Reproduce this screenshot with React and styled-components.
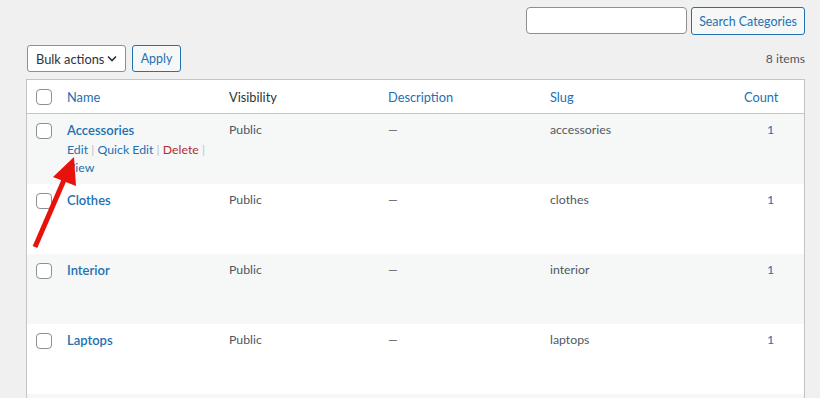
import React from 'react';
import styled, { createGlobalStyle } from 'styled-components';

const GlobalStyle = createGlobalStyle`
  html, body {
    margin: 0;
    background: #f0f0f1;
    font-family: Lato, "Noto Sans", sans-serif;
    font-size: 12.3px;
    color: #3c434a;
  }
`;

const Page = styled.div`
  position: relative;
  width: 820px;
  height: 398px;
  overflow: hidden;
  padding: 7px 15px 0 26px;
  box-sizing: border-box;
`;

const SearchBar = styled.div`
  display: flex;
  justify-content: flex-end;
  gap: 4px;
`;

const SearchInput = styled.input`
  width: 161px;
  height: 27px;
  box-sizing: border-box;
  border: 1px solid #8c8f94;
  border-radius: 4px;
  background: #fff;
`;

const Button = styled.button`
  width: ${props => props.w}px;
  height: ${props => props.h || 28}px;
  box-sizing: border-box;
  padding: 0;
  border: 1px solid #2271b1;
  border-radius: 3px;
  background: #f6f7f7;
  color: #2271b1;
  font-family: inherit;
  font-size: 12.4px;
  white-space: nowrap;
`;

const Toolbar = styled.div`
  display: flex;
  align-items: center;
  margin-top: 10px;
  margin-left: 1px;
  gap: 6px;
`;

const Select = styled.div`
  width: 99px;
  height: 27px;
  box-sizing: border-box;
  display: flex;
  align-items: center;
  justify-content: space-between;
  padding: 0 8px 0 8px;
  border: 1px solid #8c8f94;
  border-radius: 3px;
  background: #fff;
  color: #2c3338;
  font-size: 12.8px;
  white-space: nowrap;
`;

const Count = styled.span`
  margin-left: auto;
  color: #50575e;
  font-size: 12.2px;
`;

const Table = styled.div`
  margin-top: 7px;
  border: 1px solid #c3c4c7;
  background: #fff;
`;

const Row = styled.div`
  display: grid;
  grid-template-columns: 40px 162px 159px 162px 194px 1fr;
  height: ${props => (props.head ? 33 : 70)}px;
  background: ${props => (props.striped ? '#f6f7f7' : '#fff')};
  border-bottom: ${props => (props.head ? '1px solid #c3c4c7' : 'none')};
  align-items: ${props => (props.head ? 'center' : 'start')};
`;

const Cell = styled.div`
  padding: ${props => (props.head ? '0' : '7px')} 10px 0 ${props => props.indent || 0}px;
  color: ${props => props.color || '#50575e'};
  line-height: 18px;
  font-weight: ${props => (props.bold ? 600 : 400)};
  font-size: ${props => (props.head ? 12.8 : props.bold ? 13 : 12.3)}px;
`;

const Check = styled.span`
  display: block;
  width: 16px;
  height: 16px;
  box-sizing: border-box;
  margin: ${props => (props.head ? 0 : 9)}px 0 0 9px;
  border: 1px solid #8c8f94;
  border-radius: 4px;
  background: #fff;
`;

const Actions = styled.div`
  margin-top: 2px;
  font-size: 12.3px;
  font-weight: 400;
  color: #c3c4c7;
`;

const Action = styled.span`
  color: ${props => (props.danger ? '#b32d2e' : '#2271b1')};
`;

const Arrow = styled.svg`
  position: absolute;
  left: 0;
  top: 0;
  pointer-events: none;
`;

const rows = [
  { name: 'Accessories', slug: 'accessories', actions: true },
  { name: 'Clothes', slug: 'clothes' },
  { name: 'Interior', slug: 'interior' },
  { name: 'Laptops', slug: 'laptops' },
  { name: '', slug: '' },
];

const blue = '#2271b1';

export default function App() {
  return (
    <>
      <GlobalStyle />
      <Page>
        <SearchBar>
          <SearchInput />
          <Button w={114}>Search Categories</Button>
        </SearchBar>
        <Toolbar>
          <Select>
            Bulk actions
            <svg width="10" height="7" viewBox="0 0 10 7">
              <path d="M1 1.5 L5 5.5 L9 1.5" fill="none" stroke="#2c3338" strokeWidth="1.6" />
            </svg>
          </Select>
          <Button w={49} h={27}>Apply</Button>
          <Count>8 items</Count>
        </Toolbar>
        <Table>
          <Row head>
            <Check head />
            <Cell head color={blue}>Name</Cell>
            <Cell head color="#2c3338">Visibility</Cell>
            <Cell head color={blue}>Description</Cell>
            <Cell head color={blue}>Slug</Cell>
            <Cell head color={blue}>Count</Cell>
          </Row>
          {rows.map((r, i) => (
            <Row key={i} striped={i % 2 === 0}>
              {r.name ? <Check /> : <span />}
              <Cell bold color={blue}>
                {r.name}
                {r.actions && (
                  <Actions>
                    <Action>Edit</Action> | <Action>Quick Edit</Action> |{' '}
                    <Action danger>Delete</Action> | <Action>View</Action>
                  </Actions>
                )}
              </Cell>
              <Cell>{r.name && 'Public'}</Cell>
              <Cell>{r.name && '—'}</Cell>
              <Cell>{r.slug}</Cell>
              <Cell color={blue} indent={23}>{r.name && '1'}</Cell>
            </Row>
          ))}
        </Table>
        <Arrow width="820" height="398">
          <line x1="35" y1="247" x2="64" y2="180" stroke="#e8120c" strokeWidth="5" />
          <polygon points="74,157 53,177 76,186" fill="#e8120c" />
        </Arrow>
      </Page>
    </>
  );
}
